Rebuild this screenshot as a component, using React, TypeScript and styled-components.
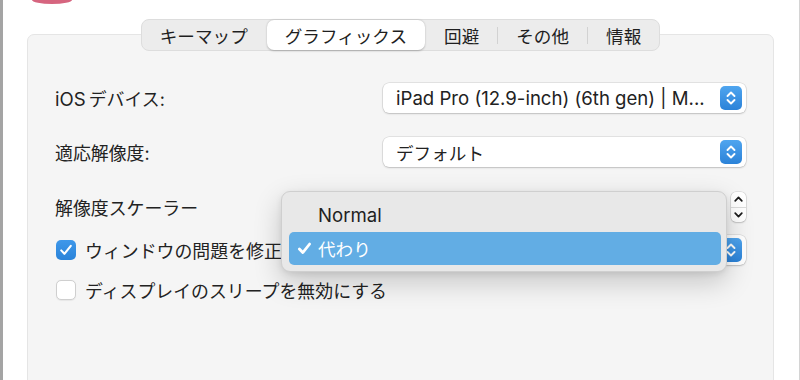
import React from 'react';
import styled, { createGlobalStyle } from 'styled-components';

const GlobalStyle = createGlobalStyle`
  html, body {
    margin: 0;
    padding: 0;
    background: #ffffff;
  }
  body {
    width: 800px;
    height: 380px;
    overflow: hidden;
    font-family: "Inter", "Noto Sans CJK JP", sans-serif;
    color: #222;
    -webkit-font-smoothing: antialiased;
  }
`;

const Window = styled.div`
  box-sizing: border-box;
  width: 800px;
  height: 380px;
  border-left: 3px solid #a4a4a4;
  border-right: 1px solid #d4d4d4;
  padding: 0 25px 0 24px;
  display: flex;
  flex-direction: column;
  overflow: hidden;
`;

const TopStrip = styled.div`
  height: 19px;
  display: flex;
  align-items: flex-start;
`;

const Avatar = styled.div`
  width: 40px;
  height: 4px;
  margin-left: 5px;
  background: #d6657f;
  border-radius: 0 0 20px 20px / 0 0 4px 4px;
`;

const TabBar = styled.div`
  align-self: center;
  box-sizing: border-box;
  height: 32px;
  display: flex;
  align-items: center;
  background: #ececec;
  border: 1px solid #dddddd;
  border-radius: 8px;
  margin-bottom: -17px;
  position: relative;
  z-index: 1;
`;

const Tab = styled.div<{ $active?: boolean }>`
  height: 30px;
  padding: 0 18px;
  display: flex;
  align-items: center;
  font-size: 17.6px;
  color: #1f1f1f;
  border-radius: 7px;
  background: ${(p) => (p.$active ? '#ffffff' : 'transparent')};
  box-shadow: ${(p) => (p.$active ? '0 0.5px 2px rgba(0,0,0,0.25)' : 'none')};
`;

const TabSep = styled.div<{ $visible: boolean }>`
  width: 1px;
  height: 17px;
  background: ${(p) => (p.$visible ? '#d2d2d2' : 'transparent')};
`;

const Panel = styled.div`
  flex: 1;
  position: relative;
  background: #f5f5f5;
  border: 1px solid #e5e5e5;
  border-radius: 7px;
  padding: 48px 27px 0 27px;
  margin-bottom: -12px;
`;

const Row = styled.div<{ $top: number }>`
  display: grid;
  grid-template-columns: 328px 1fr;
  align-items: center;
  height: 30px;
  margin-top: ${(p) => p.$top}px;
`;

const Label = styled.div`
  font-size: 17.9px;
  color: #222;
  white-space: nowrap;
`;

const Latin = styled.span<{ $gap?: number }>`
  font-size: 18.6px;
  margin-right: ${(p) => p.$gap ?? 0}px;
`;

const Popup = styled.div`
  grid-column: 2;
  height: 30px;
  box-sizing: border-box;
  display: flex;
  align-items: center;
  padding: 0 4px 0 13px;
  background: #ffffff;
  border-radius: 6px;
  box-shadow: 0 0 0 0.5px rgba(0, 0, 0, 0.14), 0 1px 2px rgba(0, 0, 0, 0.16);
`;

const PopupText = styled.div`
  flex: 1;
  font-size: 17.6px;
  color: #222;
  white-space: nowrap;
  overflow: hidden;
`;

const BlueStepper = styled.div`
  width: 22px;
  height: 24px;
  border-radius: 5px;
  background: linear-gradient(#4fa5ef, #2b82d8);
  display: flex;
  align-items: center;
  justify-content: center;
`;

const PlainStepper = styled.div`
  grid-column: 2;
  justify-self: end;
  width: 15px;
  height: 30px;
  box-sizing: border-box;
  background: #ffffff;
  border-radius: 5px;
  box-shadow: 0 0 0 0.5px rgba(0, 0, 0, 0.16), 0 1px 2px rgba(0, 0, 0, 0.14);
  display: flex;
  flex-direction: column;
`;

const StepHalf = styled.div<{ $top?: boolean }>`
  flex: 1;
  display: flex;
  align-items: center;
  justify-content: center;
  border-bottom: ${(p) => (p.$top ? '1px solid #dcdcdc' : 'none')};
`;

const CheckLabel = styled.label<{ $span?: boolean }>`
  grid-column: ${(p) => (p.$span ? '1 / span 2' : '1')};
  display: flex;
  align-items: center;
  gap: 9px;
  font-size: 17.9px;
  color: #222;
  white-space: nowrap;
`;

const Box = styled.span<{ $checked?: boolean }>`
  box-sizing: border-box;
  width: 20px;
  height: 20px;
  margin-left: 1px;
  border-radius: 5px;
  display: flex;
  align-items: center;
  justify-content: center;
  background: ${(p) => (p.$checked ? 'linear-gradient(#3f98ea, #2a83d9)' : '#ffffff')};
  border: ${(p) => (p.$checked ? 'none' : '1px solid #cfcfcf')};
  box-shadow: ${(p) => (p.$checked ? 'none' : '0 0.5px 1px rgba(0,0,0,0.06)')};
`;

const Menu = styled.div`
  position: absolute;
  left: 253px;
  top: 156px;
  width: 446px;
  height: 81px;
  box-sizing: border-box;
  padding: 6px 5px 6px 7px;
  background: #e8e8e8;
  border: 1px solid #cfcfcf;
  border-radius: 9px;
  box-shadow: 0 10px 28px rgba(0, 0, 0, 0.2), 0 2px 6px rgba(0, 0, 0, 0.08);
  display: flex;
  flex-direction: column;
  gap: 1px;
  z-index: 2;
`;

const MenuItem = styled.div<{ $selected?: boolean }>`
  height: 33px;
  display: flex;
  align-items: center;
  padding-left: 8px;
  border-radius: 5px;
  font-size: 17.6px;
  background: ${(p) => (p.$selected ? '#62ade4' : 'transparent')};
  color: ${(p) => (p.$selected ? '#ffffff' : '#1f1f1f')};
`;

const CheckSlot = styled.span`
  width: 21px;
  display: flex;
  align-items: center;
`;

const Chevrons = ({ color }: { color: string }) => (
  <svg width="10" height="16" viewBox="0 0 10 16" fill="none">
    <path d="M1.5 6 L5 2.5 L8.5 6" stroke={color} strokeWidth="1.9" strokeLinecap="round" strokeLinejoin="round" />
    <path d="M1.5 10 L5 13.5 L8.5 10" stroke={color} strokeWidth="1.9" strokeLinecap="round" strokeLinejoin="round" />
  </svg>
);

const Chevron = ({ up }: { up?: boolean }) => (
  <svg width="9" height="6" viewBox="0 0 9 6" fill="none">
    <path
      d={up ? 'M1.2 4.8 L4.5 1.4 L7.8 4.8' : 'M1.2 1.2 L4.5 4.6 L7.8 1.2'}
      stroke="#1a1a1a"
      strokeWidth="1.7"
      strokeLinecap="round"
      strokeLinejoin="round"
    />
  </svg>
);

const CheckMark = ({ size = 14, weight = 2.1 }: { size?: number; weight?: number }) => (
  <svg width={size} height={size} viewBox="0 0 14 14" fill="none">
    <path d="M2.2 7.4 L5.4 10.8 L11.8 2.8" stroke="#ffffff" strokeWidth={weight} strokeLinecap="round" strokeLinejoin="round" />
  </svg>
);

const tabs = ['キーマップ', 'グラフィックス', '回避', 'その他', '情報'];
const activeTab = 1;

const App: React.FC = () => {
  return (
    <>
      <GlobalStyle />
      <Window>
        <TopStrip>
          <Avatar />
        </TopStrip>
        <TabBar>
          {tabs.map((t, i) => (
            <React.Fragment key={t}>
              {i > 0 && <TabSep $visible={i !== activeTab && i - 1 !== activeTab} />}
              <Tab $active={i === activeTab}>{t}</Tab>
            </React.Fragment>
          ))}
        </TabBar>
        <Panel>
          <Row $top={0}>
            <Label>
              <Latin $gap={3}>iOS</Latin>デバイス:
            </Label>
            <Popup>
              <PopupText>
                <Latin>iPad Pro (12.9-inch) (6th gen) | M...</Latin>
              </PopupText>
              <BlueStepper>
                <Chevrons color="#ffffff" />
              </BlueStepper>
            </Popup>
          </Row>
          <Row $top={24}>
            <Label>適応解像度:</Label>
            <Popup>
              <PopupText>デフォルト</PopupText>
              <BlueStepper>
                <Chevrons color="#ffffff" />
              </BlueStepper>
            </Popup>
          </Row>
          <Row $top={25}>
            <Label>解像度スケーラー</Label>
            <PlainStepper>
              <StepHalf $top>
                <Chevron up />
              </StepHalf>
              <StepHalf>
                <Chevron />
              </StepHalf>
            </PlainStepper>
          </Row>
          <Row $top={13}>
            <CheckLabel>
              <Box $checked>
                <CheckMark />
              </Box>
              ウィンドウの問題を修正
            </CheckLabel>
            <Popup>
              <PopupText>代わり</PopupText>
              <BlueStepper>
                <Chevrons color="#ffffff" />
              </BlueStepper>
            </Popup>
          </Row>
          <Row $top={10}>
            <CheckLabel $span>
              <Box />
              ディスプレイのスリープを無効にする
            </CheckLabel>
          </Row>
          <Menu>
            <MenuItem>
              <CheckSlot />
              <Latin>Normal</Latin>
            </MenuItem>
            <MenuItem $selected>
              <CheckSlot>
                <CheckMark size={15} weight={2.6} />
              </CheckSlot>
              代わり
            </MenuItem>
          </Menu>
        </Panel>
      </Window>
    </>
  );
};

export default App;
